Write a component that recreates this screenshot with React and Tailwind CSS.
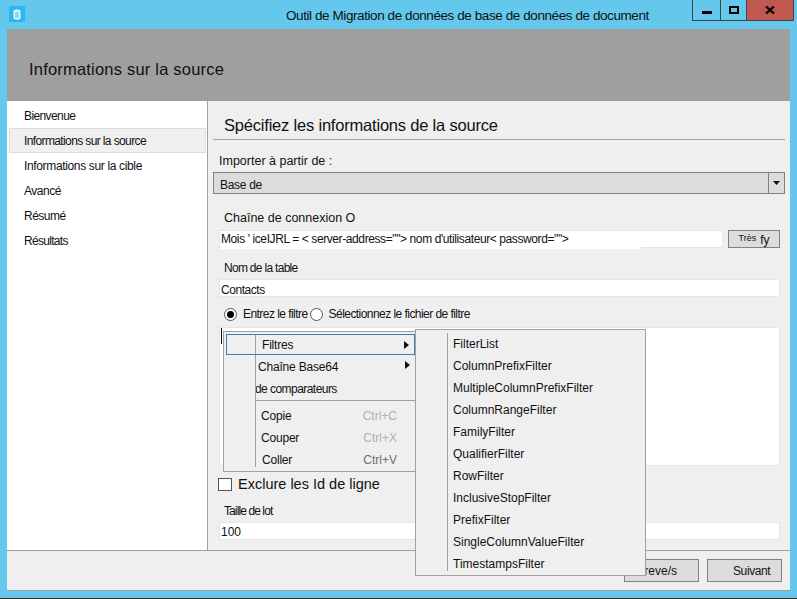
import React from 'react';

const font = { fontFamily: '"Liberation Sans", Arial, sans-serif' };

const steps = [
    { label: 'Bienvenue', cls: 'tracking-[-0.6px]' },
    { label: 'Informations sur la source', cls: 'tracking-[-0.62px]' },
    { label: 'Informations sur la cible', cls: 'tracking-[-0.35px]' },
    { label: 'Avancé', cls: 'tracking-[-0.5px]' },
    { label: 'Résumé', cls: 'tracking-[-0.5px]' },
    { label: 'Résultats', cls: 'tracking-[-0.7px]' },
];

const filters = [
    'FilterList', 'ColumnPrefixFilter', 'MultipleColumnPrefixFilter', 'ColumnRangeFilter', 'FamilyFilter',
    'QualifierFilter', 'RowFilter', 'InclusiveStopFilter', 'PrefixFilter', 'SingleColumnValueFilter', 'TimestampsFilter'
];

function Arrow() {
    return (
        <svg width="5" height="8" viewBox="0 0 5 8" className="absolute right-[5px] top-[6px]">
            <path d="M0 0 L5 4 L0 8 Z" fill="#111" />
        </svg>
    );
}

function Field({ children, className = '' }) {
    return (
        <div className={`relative h-[18px] bg-white border border-[#e4e4ea] flex items-center pl-[1px] text-[12px] ${className}`}>
            {children}
        </div>
    );
}

function MenuItem({ label, keys, pad, keyColor }) {
    return (
        <div className={`h-[22px] flex items-center justify-between pr-[19px] ${pad}`}>
            <span>{label}</span>
            <span className={`${keyColor} tracking-normal`}>{keys}</span>
        </div>
    );
}

function ContextMenu() {
    return (
        <div className="absolute left-[3px] top-[3px] w-[194px] h-[141px] bg-[#efefef] border border-[#a0a0a0] text-[12px] text-[#111] tracking-[-0.2px] pt-[2px] pl-[2px]">
            <div className="absolute left-[31px] top-[22px] bottom-[4px] w-px bg-[#a0a0a0]" />
            <div className="relative h-[21px] w-[189px] border border-[#3f7fa8] flex items-center pl-[35px]">
                <div className="absolute left-[28px] top-0 bottom-0 w-px bg-[#a0a0a0]" />
                Filtres
                <Arrow />
            </div>
            <div className="relative h-[23px] w-[189px] flex items-center pl-[32px]">
                Chaîne Base64
                <Arrow />
            </div>
            <div className="h-[21px] flex items-center pl-[29px] tracking-[-0.55px]">de comparateurs</div>
            <div className="h-px ml-[29px] mt-[1px] mb-[4px] bg-[#a0a0a0]" />
            <MenuItem label="Copie" keys="Ctrl+C" pad="pl-[35px]" keyColor="text-[#b0b0b0]" />
            <MenuItem label="Couper" keys="Ctrl+X" pad="pl-[35px]" keyColor="text-[#b0b0b0]" />
            <MenuItem label="Coller" keys="Ctrl+V" pad="pl-[36px]" keyColor="text-[#707070]" />
        </div>
    );
}

function FilterMenu() {
    return (
        <div className="absolute left-[415px] top-[329px] w-[231px] h-[247px] bg-[#efefef] border border-[#a0a0a0] text-[12px] text-[#111] pt-[3px] pl-[31px]">
            <div className="h-[238px] border-l border-[#a0a0a0] pl-[5px]">
                {filters.map((name) => (
                    <div key={name} className="h-[22px] flex items-center">{name}</div>
                ))}
            </div>
        </div>
    );
}

export default function App() {
    return (
        <div style={font} className="relative w-[797px] h-[599px] overflow-hidden bg-[#64c8ec] text-[#111] flex flex-col">
            {/* Title bar */}
            <div className="relative h-[29px] shrink-0">
                <div className="absolute left-[9px] top-[6px] w-[16px] h-[16px] bg-[#2bb8ee] flex items-center justify-center">
                    <svg width="8" height="11" viewBox="0 0 8 11">
                        <path d="M0.5 2 C0.5 0 7.5 0 7.5 2 L7.5 9 C7.5 11 0.5 11 0.5 9 Z" fill="#e8f6fc" />
                        <path d="M3 3 L3 9 M5 3 L5 9" stroke="#2bb8ee" strokeWidth="1" />
                    </svg>
                </div>
                <div className="absolute left-[286px] top-[8px] text-[13.5px] leading-[16px] tracking-[-0.42px] whitespace-nowrap">
                    Outil de Migration de données de base de données de document
                </div>
                <div className="absolute left-[692px] top-0 w-[102px] h-[21px] flex border border-t-0 border-[#444]">
                    <div className="w-[28px] border-r border-[#444] flex items-center justify-center">
                        <div className="w-[10px] h-[3px] mt-[5px] bg-black" />
                    </div>
                    <div className="w-[26px] border-r border-[#444] flex items-center justify-center">
                        <div className="w-[10px] h-[8px] border-2 border-black" />
                    </div>
                    <div className="flex-1 bg-[#c0584f] flex items-center justify-center">
                        <svg width="10" height="8" viewBox="0 0 10 8">
                            <path d="M1 0.5 L9 7.5 M9 0.5 L1 7.5" stroke="#000" strokeWidth="2.2" />
                        </svg>
                    </div>
                </div>
            </div>

            <div className="ml-[7px] mr-[7px] flex flex-col h-[562px] border-b border-[#a0a0a0] bg-[#efefef]">
                {/* Header */}
                <div className="h-[72px] shrink-0 bg-[#9f9f9f] flex items-center pl-[22px] text-[16.5px] tracking-[0.2px] pt-[8px]">
                    Informations sur la source
                </div>

                <div className="h-[450px] shrink-0 flex border-b border-[#a0a0a0]">
                    {/* Sidebar */}
                    <div className="w-[201px] shrink-0 bg-white border-r border-[#a0a0a0] pl-[2px] pr-[1px] pt-[2px] text-[12px]">
                        {steps.map((step, i) => (
                            <div
                                key={step.label}
                                className={`h-[25px] flex items-center pl-[14px] border ${step.cls} ${i === 1 ? 'bg-[#efefef] border-[#dcdcdc]' : 'border-transparent'}`}
                            >
                                {step.label}
                            </div>
                        ))}
                    </div>

                    {/* Form */}
                    <div className="flex-1 relative pl-[5px] pr-[5px] text-[12px]">
                        <div className="h-[39px] border-b border-[#a0a0a0] flex items-center pl-[11px] pt-[11px] text-[16.5px] tracking-[-0.2px]">
                            Spécifiez les informations de la source
                        </div>
                        <div className="h-[32px] flex items-end pl-[6px] pb-[1px] text-[12.5px]">Importer à partir de :</div>
                        <div className="h-[22px] bg-[#dcdcdc] border border-[#808080] flex items-stretch pl-[6px] justify-between">
                            <span className="pt-[3px] tracking-[-0.3px]">Base de</span>
                            <div className="w-[16px] border-l border-[#808080] flex items-center justify-center">
                                <svg width="7" height="4" viewBox="0 0 7 4"><path d="M0 0 L7 0 L3.5 4 Z" fill="#111" /></svg>
                            </div>
                        </div>

                        <div className="h-[36px] flex items-end pl-[11px] pb-[2px] text-[12.5px]">Chaîne de connexion O</div>
                        <div className="flex pl-[6px] pr-[5px] gap-[5px]">
                            <Field className="w-[504px] pl-0 tracking-[-0.4px]">
                                Mois ' iceIJRL = &lt; server-address=""&gt; nom d'utilisateur&lt; password=""&gt;
                                <div className="absolute left-0 top-[16px] w-[421px] h-[2px] bg-white" />
                            </Field>
                            <div className="w-[52px] h-[18px] bg-[#dcdcdc] border border-[#808080] flex items-center justify-center gap-[4px]">
                                <span className="text-[9px]">Très</span>
                                <span className="pt-[2px]">fy</span>
                            </div>
                        </div>

                        <div className="h-[31px] flex items-end pl-[11px] pb-[2px] tracking-[-0.7px]">Nom de la table</div>
                        <div className="pl-[6px] pr-[5px]">
                            <Field className="tracking-[-0.45px]"><span className="pt-[3px]">Contacts</span></Field>
                        </div>

                        <div className="h-[30px] flex items-center pl-[11px] pt-[4px] tracking-[-0.55px]">
                            <span className="w-[13px] h-[13px] rounded-full border border-[#555] bg-white flex items-center justify-center">
                                <span className="w-[7px] h-[7px] rounded-full bg-black" />
                            </span>
                            <span className="ml-[6px]">Entrez le filtre</span>
                            <span className="w-[13px] h-[13px] ml-[2px] rounded-full border border-[#555] bg-white" />
                            <span className="ml-[6px]">Sélectionnez le fichier de filtre</span>
                        </div>

                        <div className="relative ml-[6px] mr-[5px] h-[139px] bg-white border border-[#e4e4ea]">
                            <div className="absolute left-[1px] top-0 w-px h-[16px] bg-[#111]" />
                            <ContextMenu />
                        </div>

                        <div className="h-[36px] flex items-center pl-[5px] pt-[1px] text-[14.5px]">
                            <span className="w-[14px] h-[13px] border border-[#555] bg-white" />
                            <span className="ml-[6px]">Exclure les Id de ligne</span>
                        </div>
                        <div className="h-[20px] flex items-center pl-[11px] pb-[2px] tracking-[-0.9px]">Taille de lot</div>
                        <div className="pl-[6px] pr-[5px]">
                            <Field><span className="pt-[2px]">100</span></Field>
                        </div>
                    </div>
                </div>

                {/* Footer buttons */}
                <div className="flex-1 flex justify-end items-start pt-[8px] pr-[8px] gap-[8px] text-[12px]">
                    <div className="w-[75px] h-[23px] bg-[#dcdcdc] border border-[#808080] flex items-center justify-end pr-[21px] pt-[1px]">
                        Preve/s
                    </div>
                    <div className="w-[75px] h-[23px] bg-[#dcdcdc] border border-[#808080] flex items-center pl-[25px] pt-[1px] tracking-[-0.4px]">
                        Suivant
                    </div>
                </div>
            </div>

            <FilterMenu />
            <div className="absolute left-0 right-0 bottom-0 h-px bg-[#333]" />
        </div>
    );
}
